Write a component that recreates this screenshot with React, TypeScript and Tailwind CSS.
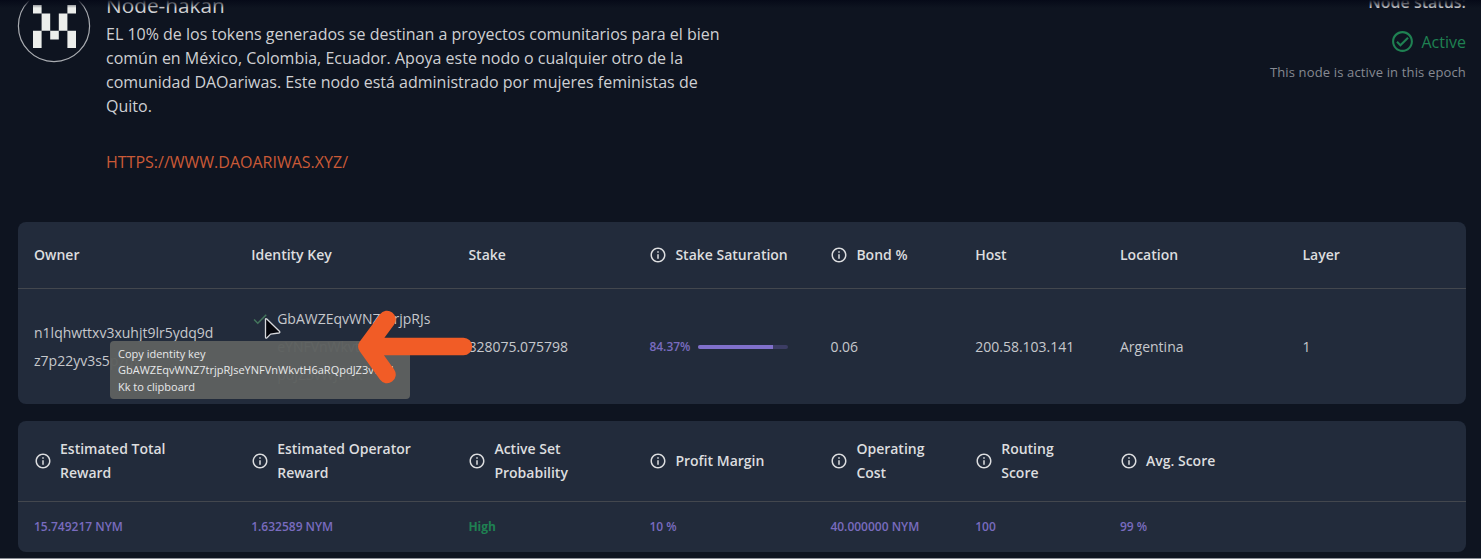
import { ReactNode } from "react";
import { MdCheck, MdInfoOutline, MdOutlineCheckCircle } from "react-icons/md";

const GRID = "grid grid-cols-[15fr_15fr_12.5fr_12.5fr_10fr_10fr_12.6fr_12.4fr]";

function Heading({ children, info }: { children: ReactNode; info?: boolean }) {
  return (
    <div className="flex items-center gap-2 pl-4 text-[14px] leading-6 font-semibold text-[#dcdddf]">
      {info && <MdInfoOutline className="size-[18px] shrink-0" />}
      <span className="whitespace-nowrap">{children}</span>
    </div>
  );
}

function Value({ children }: { children: ReactNode }) {
  return <div className="flex items-center pl-4 text-[14px] whitespace-nowrap text-[#c6c8cc]">{children}</div>;
}

function Metric({ children, good }: { children: ReactNode; good?: boolean }) {
  return (
    <div className={"flex items-center pl-4 text-[12px] whitespace-nowrap " + (good ? "font-bold text-[#1f8152]" : "font-semibold text-[#796bbf]")}>
      {children}
    </div>
  );
}

function Logo() {
  return (
    <svg viewBox="0 0 74 74" className="size-[74px] shrink-0">
      <circle cx="37" cy="37" r="35.6" fill="none" stroke="#a9acb1" strokeWidth="1.2" />
      <path
        fill="#eceeeb"
        d="M16 16h8.6v8.6H16zM50.4 16H59v8.6h-8.6zM24.6 24.6h8.6v17.2h-8.6zM41.8 24.6h8.6v17.2h-8.6zM16 41.8h8.6V59H16zM33.2 41.8h8.6v8.6h-8.6zM50.4 41.8H59V59h-8.6z"
      />
    </svg>
  );
}

export default function App() {
  return (
    <div className="relative h-[559px] overflow-hidden border-b border-[#8b8f96] bg-[#0e1420] pr-[15px] pl-[18px] font-['Open_Sans',sans-serif] text-[#cfd0d3]">
      <div className="absolute inset-x-0 top-0 h-2 bg-linear-to-b from-[#060a18] to-transparent" />
      <header className="flex h-[222px] justify-between">
        <div className="-ml-px flex gap-[15px]">
          <div className="-mt-[11px]">
            <Logo />
          </div>
          <div>
            <h1 className="-mt-[9px] mb-[3px] text-[20.8px] leading-7">Node-hakan</h1>
            <p className="text-[16px] leading-6 whitespace-nowrap">
              EL 10% de los tokens generados se destinan a proyectos comunitarios para el bien
              <br />
              común en México, Colombia, Ecuador. Apoya este nodo o cualquier otro de la
              <br />
              comunidad DAOariwas. Este nodo está administrado por mujeres feministas de
              <br />
              Quito.
            </p>
            <a className="mt-8 block text-[16px] leading-6 text-[#ca5a37]">HTTPS://WWW.DAOARIWAS.XYZ/</a>
          </div>
        </div>
        <div className="flex flex-col items-end">
          <div className="-mt-[10px] text-[16px] leading-6 font-semibold">Node status:</div>
          <div className="mt-[15px] flex items-center gap-[7px] text-[16px] leading-6 font-medium text-[#1f8152]">
            <MdOutlineCheckCircle className="size-[25px]" />
            Active
          </div>
          <div className="mt-2 text-[13px] leading-5 tracking-[0.15px] text-[#868a92]">This node is active in this epoch</div>
        </div>
      </header>

      <section className="relative h-[182px] rounded-lg bg-[#222b3b]">
        <div className={GRID + " h-[67px] border-b border-[#43474e]"}>
          <Heading>Owner</Heading>
          <Heading>Identity Key</Heading>
          <Heading>Stake</Heading>
          <Heading info>Stake Saturation</Heading>
          <Heading info>Bond %</Heading>
          <Heading>Host</Heading>
          <Heading>Location</Heading>
          <Heading>Layer</Heading>
        </div>
        <div className={GRID + " h-[115px]"}>
          <Value>
            <span className="leading-7">
              n1lqhwttxv3xuhjt9lr5ydq9d
              <br />
              z7p22yv3s5pzqv
            </span>
          </Value>
          <div className="flex items-start gap-2 pt-4 pl-4 text-[14px] leading-7 text-[#c6c8cc]">
            <MdCheck className="mt-[5px] size-[18px] text-[#44765d]" />
            <span>
              GbAWZEqvWNZ7trjpRJs
              <br />
              eYNFVnWkvtH6aRQ
              <br />
              pdJZ3vWJdKk
            </span>
          </div>
          <Value>828075.075798</Value>
          <div className="flex items-center gap-[7px] pl-4 text-[12px] font-semibold text-[#796bbf]">
            84.37%
            <div className="h-1 w-[90px] overflow-hidden rounded-full bg-[#3c3d64]">
              <div className="h-full w-[84.37%] bg-[#8070cb]" />
            </div>
          </div>
          <Value>0.06</Value>
          <Value>200.58.103.141</Value>
          <Value>Argentina</Value>
          <Value>1</Value>
        </div>

        <div className="absolute top-[119px] left-[92px] h-[58px] w-[300px] rounded bg-[#5d605f]/97 py-[5px] pl-2 text-[11px] leading-[16.4px] font-medium whitespace-nowrap text-[#e8e9ea]">
          Copy identity key
          <br />
          GbAWZEqvWNZ7trjpRJseYNFVnWkvtH6aRQpdJZ3vWJd
          <br />
          Kk to clipboard
        </div>
        <svg viewBox="0 0 20 26" className="absolute top-[95px] left-[244px] h-[26px] w-5">
          <path d="M3.5 2v18.2q.2 1.6 1.5.5l3.6-3.6 8.2-1.1q1.8-.4.6-1.7L4.8 2q-1-.8-1.3 0z" fill="#05060c" stroke="#d6d8dc" strokeWidth="1.3" strokeLinejoin="round" />
        </svg>
        <svg viewBox="0 0 116 76" className="absolute top-[86px] left-[339px] h-[76px] w-[116px]">
          <path d="M106.5 38.5H12M30 11.5l-20 27 20 28" fill="none" stroke="#f15c26" strokeWidth="17.5" strokeLinecap="round" strokeLinejoin="round" />
        </svg>
      </section>

      <section className="mt-[17px] h-[131px] rounded-lg bg-[#222b3b]">
        <div className={GRID + " h-[81px] border-b border-[#43474e]"}>
          <Heading info>Estimated Total<br />Reward</Heading>
          <Heading info>Estimated Operator<br />Reward</Heading>
          <Heading info>Active Set<br />Probability</Heading>
          <Heading info>Profit Margin</Heading>
          <Heading info>Operating<br />Cost</Heading>
          <Heading info>Routing<br />Score</Heading>
          <Heading info>Avg. Score</Heading>
        </div>
        <div className={GRID + " h-[50px]"}>
          <Metric>15.749217 NYM</Metric>
          <Metric>1.632589 NYM</Metric>
          <Metric good>High</Metric>
          <Metric>10 %</Metric>
          <Metric>40.000000 NYM</Metric>
          <Metric>100</Metric>
          <Metric>99 %</Metric>
        </div>
      </section>
    </div>
  );
}
